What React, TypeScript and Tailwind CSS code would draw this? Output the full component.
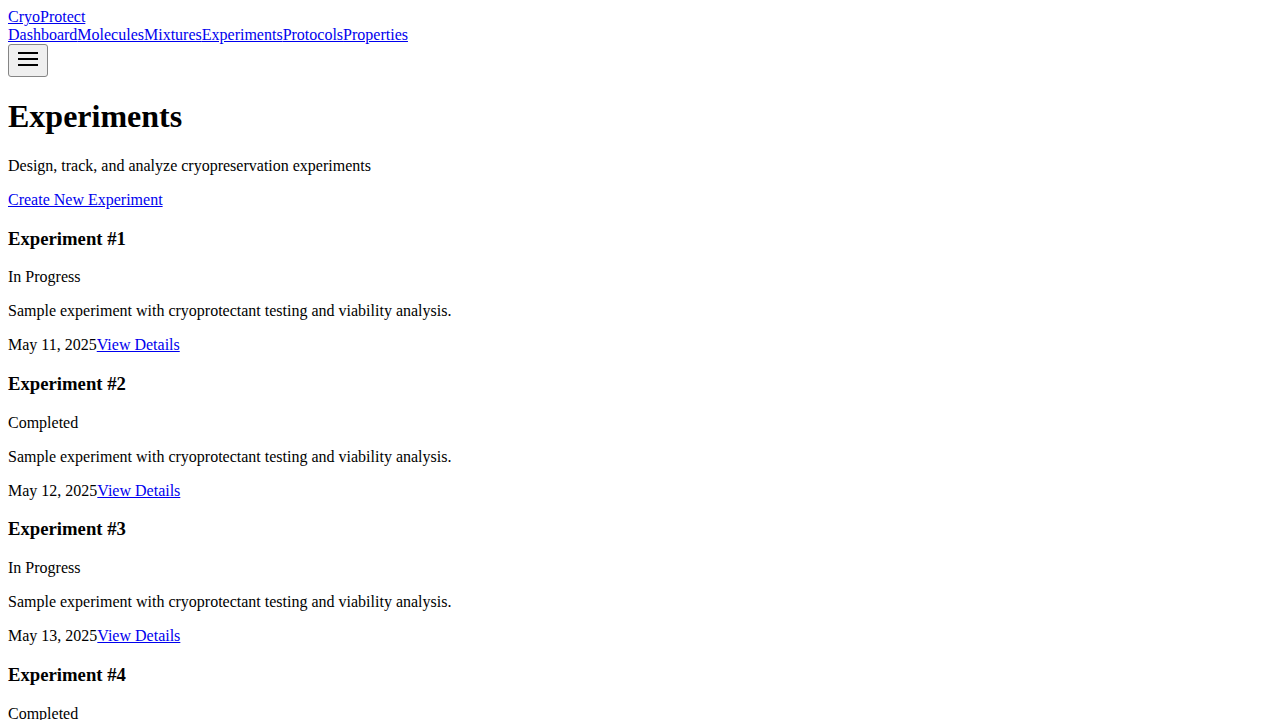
const navLinks = ['Dashboard', 'Molecules', 'Mixtures', 'Experiments', 'Protocols', 'Properties']

const experiments = [
  { id: 1, status: 'In Progress', date: 'May 11, 2025' },
  { id: 2, status: 'Completed', date: 'May 12, 2025' },
  { id: 3, status: 'In Progress', date: 'May 13, 2025' },
  { id: 4, status: 'Completed', date: 'May 14, 2025' },
  { id: 5, status: 'In Progress', date: 'May 15, 2025' },
]

function MenuIcon() {
  return (
    <svg width="20" height="14" viewBox="0 0 20 14" fill="none" stroke="#000" strokeWidth="2">
      <path d="M0 1h20" />
      <path d="M0 7h20" />
      <path d="M0 13h20" />
    </svg>
  )
}

export default function App() {
  return (
    <div className="min-h-screen bg-white p-2 text-base leading-[normal] text-black font-['Liberation_Serif',serif]">
      <header>
        <div>
          <a href="#" className="text-[#0000ee] underline">
            CryoProtect
          </a>
        </div>
        <nav>
          {navLinks.map((link) => (
            <a key={link} href="#" className="text-[#0000ee] underline">
              {link}
            </a>
          ))}
        </nav>
        <button className="flex rounded-[3px] border border-[#858585] bg-[#efefef] pt-[7px] pb-[10px] px-[9px]">
          <MenuIcon />
        </button>
      </header>

      <main>
        <h1 className="my-[21.44px] text-[32px] font-bold">Experiments</h1>
        <p className="my-4">Design, track, and analyze cryopreservation experiments</p>
        <div className="my-4">
          <a href="#" className="text-[#0000ee] underline">
            Create New Experiment
          </a>
        </div>

        <div>
          {experiments.map((exp) => (
            <div key={exp.id}>
              <h3 className="my-[18.72px] text-[18.72px] font-bold">Experiment #{exp.id}</h3>
              <p className="my-4">{exp.status}</p>
              <p className="my-4">Sample experiment with cryoprotectant testing and viability analysis.</p>
              <div className="my-4">
                <span>{exp.date}</span>
                <a href="#" className="text-[#0000ee] underline">
                  View Details
                </a>
              </div>
            </div>
          ))}
        </div>
      </main>
    </div>
  )
}
